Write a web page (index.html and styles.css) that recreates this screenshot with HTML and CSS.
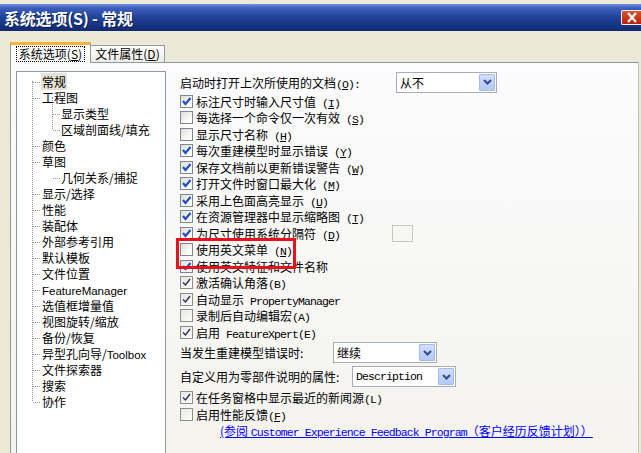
FILE: index.html
```html
<!DOCTYPE HTML>
<html lang="zh-CN">
<head>
<meta charset="UTF-8">
<title>系统选项(S) - 常规</title>
<link rel="stylesheet" href="styles.css">
</head>
<body>
  <div class="strip"></div>
  <div class="titlebar">
    <span class="title">系统选项(S) - 常规</span>
    <span class="close"><svg width="12" height="11" viewBox="0 0 12 11"><path d="M2 1 L10 10 M10 1 L2 10" stroke="#fff" stroke-width="2.2"/></svg></span>
  </div>

  <div class="tabs">
    <div class="tab on"><span class="focus">系统选项(<u>S</u>)</span></div>
    <div class="tab">文件属性(<u>D</u>)</div>
  </div>

  <div class="panel">
    <div class="tree">
      <div class="vline"></div>
      <div class="vline sub"></div>
      <div class="node"><span class="sel-node">常规</span></div>
      <div class="node">工程图</div>
      <div class="node lv2">显示类型</div>
      <div class="node lv2">区域剖面线/填充</div>
      <div class="node">颜色</div>
      <div class="node">草图</div>
      <div class="node lv2">几何关系/捕捉</div>
      <div class="node">显示/选择</div>
      <div class="node">性能</div>
      <div class="node">装配体</div>
      <div class="node">外部参考引用</div>
      <div class="node">默认模板</div>
      <div class="node">文件位置</div>
      <div class="node"><span class="en">FeatureManager</span></div>
      <div class="node">选值框增量值</div>
      <div class="node">视图旋转/缩放</div>
      <div class="node">备份/恢复</div>
      <div class="node">异型孔向导/<span class="en">Toolbox</span></div>
      <div class="node">文件探索器</div>
      <div class="node">搜索</div>
      <div class="node">协作</div>
    </div>

    <div class="opts">
      <div class="row tall">
        <span class="lbl w1">启动时打开上次所使用的文档<span class="m">(<u>O</u>):</span></span>
        <div class="combo w-a"><span class="val">从不</span><span class="arrow"><svg width="9" height="6" viewBox="0 0 9 6"><path d="M1 1 L4.5 4.5 L8 1" fill="none" stroke="#2c4c8c" stroke-width="2"/></svg></span></div>
      </div>

      <div class="row"><span class="cb"><svg width="11" height="11" viewBox="0 0 11 11"><path d="M2 5 L4.5 8 L9.5 2" fill="none" stroke="#2150c0" stroke-width="2.2"/></svg></span><span>标注尺寸时输入尺寸值<span class="m"> (<u>I</u>)</span></span></div>
      <div class="row"><span class="cb"></span><span>每选择一个命令仅一次有效<span class="m"> (<u>S</u>)</span></span></div>
      <div class="row"><span class="cb"></span><span>显示尺寸名称<span class="m"> (<u>H</u>)</span></span></div>
      <div class="row"><span class="cb"><svg width="11" height="11" viewBox="0 0 11 11"><path d="M2 5 L4.5 8 L9.5 2" fill="none" stroke="#2150c0" stroke-width="2.2"/></svg></span><span>每次重建模型时显示错误<span class="m"> (<u>Y</u>)</span></span></div>
      <div class="row"><span class="cb"><svg width="11" height="11" viewBox="0 0 11 11"><path d="M2 5 L4.5 8 L9.5 2" fill="none" stroke="#2150c0" stroke-width="2.2"/></svg></span><span>保存文档前以更新错误警告<span class="m"> (<u>W</u>)</span></span></div>
      <div class="row"><span class="cb"><svg width="11" height="11" viewBox="0 0 11 11"><path d="M2 5 L4.5 8 L9.5 2" fill="none" stroke="#2150c0" stroke-width="2.2"/></svg></span><span>打开文件时窗口最大化<span class="m"> (<u>M</u>)</span></span></div>
      <div class="row"><span class="cb"><svg width="11" height="11" viewBox="0 0 11 11"><path d="M2 5 L4.5 8 L9.5 2" fill="none" stroke="#2150c0" stroke-width="2.2"/></svg></span><span>采用上色面高亮显示<span class="m"> (<u>U</u>)</span></span></div>
      <div class="row"><span class="cb"><svg width="11" height="11" viewBox="0 0 11 11"><path d="M2 5 L4.5 8 L9.5 2" fill="none" stroke="#2150c0" stroke-width="2.2"/></svg></span><span>在资源管理器中显示缩略图<span class="m"> (<u>T</u>)</span></span></div>
      <div class="row"><span class="cb"><svg width="11" height="11" viewBox="0 0 11 11"><path d="M2 5 L4.5 8 L9.5 2" fill="none" stroke="#2150c0" stroke-width="2.2"/></svg></span><span class="lbl w2">为尺寸使用系统分隔符<span class="m"> (<u>D</u>)</span></span><span class="field"></span></div>
      <div class="row marked"><span class="cb"></span><span>使用英文菜单<span class="m"> (<u>N</u>)</span></span></div>
      <div class="row"><span class="cb"><svg width="11" height="11" viewBox="0 0 11 11"><path d="M2 5 L4.5 8 L9.5 2" fill="none" stroke="#2150c0" stroke-width="2.2"/></svg></span><span>使用英文特征和文件名称</span></div>
      <div class="row"><span class="cb thin"><svg width="11" height="11" viewBox="0 0 11 11"><path d="M2 5.5 L4.5 8 L9 2" fill="none" stroke="#23335e" stroke-width="1.4"/></svg></span><span>激活确认角落<span class="m">(B)</span></span></div>
      <div class="row"><span class="cb thin"><svg width="11" height="11" viewBox="0 0 11 11"><path d="M2 5.5 L4.5 8 L9 2" fill="none" stroke="#23335e" stroke-width="1.4"/></svg></span><span>自动显示<span class="m"> PropertyManager</span></span></div>
      <div class="row"><span class="cb thin"></span><span>录制后自动编辑宏<span class="m">(A)</span></span></div>
      <div class="row"><span class="cb thin"><svg width="11" height="11" viewBox="0 0 11 11"><path d="M2 5.5 L4.5 8 L9 2" fill="none" stroke="#23335e" stroke-width="1.4"/></svg></span><span>启用<span class="m"> FeatureXpert(E)</span></span></div>

      <div class="row combo-row">
        <span class="lbl w3">当发生重建模型错误时:</span>
        <div class="combo w-b"><span class="val">继续</span><span class="arrow"><svg width="9" height="6" viewBox="0 0 9 6"><path d="M1 1 L4.5 4.5 L8 1" fill="none" stroke="#2c4c8c" stroke-width="2"/></svg></span></div>
      </div>
      <div class="row combo-row">
        <span class="lbl w4">自定义用为零部件说明的属性:</span>
        <div class="combo w-b"><span class="val m">Description</span><span class="arrow"><svg width="9" height="6" viewBox="0 0 9 6"><path d="M1 1 L4.5 4.5 L8 1" fill="none" stroke="#2c4c8c" stroke-width="2"/></svg></span></div>
      </div>

      <div class="row gap"><span class="cb thin"><svg width="11" height="11" viewBox="0 0 11 11"><path d="M2 5.5 L4.5 8 L9 2" fill="none" stroke="#23335e" stroke-width="1.4"/></svg></span><span>在任务窗格中显示最近的新闻源<span class="m">(L)</span></span></div>
      <div class="row"><span class="cb thin"></span><span>启用性能反馈<span class="m">(<u>F</u>)</span></span></div>
      <div class="row link"><a href="#">(参阅 <span class="m">Customer Experience Feedback Program</span>（客户经历反馈计划））</a></div>
    </div>
  </div>
</body>
</html>
```

FILE: styles.css
```css
* { box-sizing: border-box; }
body {
  margin: 0;
  width: 641px;
  height: 453px;
  overflow: hidden;
  background: #ece9d8;
  font-family: "Noto Sans CJK SC", sans-serif;
  font-size: 12px;
  color: #000;
}
u { text-decoration: underline; }

.strip { height: 4px; }
.titlebar {
  height: 27px;
  display: flex;
  align-items: center;
  justify-content: space-between;
  padding-left: 4px;
  background: linear-gradient(#7191e0 0%, #3d5fbc 15%, #23459c 45%, #173582 75%, #102a70 100%);
  color: #fff;
}
.title {
  font-size: 16px;
  font-weight: bold;
  text-shadow: 1px 1px 0 #0a1c50;
  letter-spacing: -0.2px;
}
.close {
  width: 21px;
  height: 15px;
  margin-right: -1px;
  display: flex;
  align-items: center;
  justify-content: center;
  border: 1px solid #f2f2f2;
  border-right: none;
  border-radius: 2px 0 0 2px;
  background: linear-gradient(#d9542c, #b8200c);
}

.tabs {
  display: flex;
  align-items: flex-end;
  margin-top: 11px;
  padding-left: 10px;
  height: 20px;
}
.tab {
  width: 74px;
  height: 17px;
  line-height: 15px;
  text-align: center;
  border: 1px solid #919b9c;
  border-left: none;
  border-bottom: none;
  background: linear-gradient(#fefefe, #ecebe6);
}
.tab.on {
  width: 81px;
  height: 21px;
  margin-bottom: -1px;
  border-left: 1px solid #919b9c;
  border-top: 3px solid #f7b436;
  background: #fcfcfe;
  position: relative;
  padding-top: 1px;
}
.focus {
  display: inline-block;
  padding: 0 2px;
  line-height: 14px;
  outline: 1px dotted #000;
}

.panel {
  display: flex;
  margin-left: 10px;
  width: 629px;
  height: 400px;
  padding: 8px 0 0 5px;
  border: 1px solid #919b9c;
  border-right-color: #c4c2b8;
  background: linear-gradient(#fcfcfe, #f4f3ee);
}

/* tree */
.tree {
  position: relative;
  width: 150px;
  height: 400px;
  padding-top: 2px;
  border: 1px solid #8e9aa6;
  background: #fff;
}
.vline {
  position: absolute;
  left: 15px;
  top: 9px;
  height: 320px;
  border-left: 1px dotted #9a9a9a;
}
.vline.sub { left: 35px; top: 25px; height: 32px; }
.node {
  position: relative;
  height: 16px;
  line-height: 16px;
  padding-left: 25px;
  white-space: nowrap;
}
.node::before {
  content: "";
  position: absolute;
  left: 16px;
  top: 8px;
  width: 7px;
  border-top: 1px dotted #9a9a9a;
}
.node.lv2 { padding-left: 44px; }
.node.lv2::before { left: 36px; }
.sel-node { background: #e6e3d6; padding: 0 1px; margin-left: -1px; }
.en { font-family: "Liberation Sans", sans-serif; font-size: 11.5px; }

/* options */
.opts {
  padding-left: 14px;
  white-space: nowrap;
}
.row {
  position: relative;
  display: flex;
  align-items: center;
  height: 16.5px;
}
.row.tall { height: 22px; }
.row.combo-row { height: 24px; }
.row.gap { margin-top: 1px; }
.lbl { display: inline-block; }
.w1 { width: 216px; }
.w2 { width: 196px; }
.w3 { width: 153px; }
.w4 { width: 172px; }
.m {
  font-family: "Liberation Mono", monospace;
  font-size: 11.5px;
  letter-spacing: -0.9px;
}

.cb {
  display: inline-flex;
  align-items: center;
  justify-content: center;
  flex: none;
  width: 13px;
  height: 13px;
  margin-right: 3px;
  border: 1px solid #7b8894;
  background: linear-gradient(135deg, #dedcd4, #fbfbf9 70%);
}
.cb.thin { border-color: #8d8d8d; background: linear-gradient(135deg, #e8e7e2, #fdfdfc); }

.field {
  width: 21px;
  height: 17px;
  border: 1px solid #c9c7ba;
  background: #f7f7f4;
}

.combo {
  display: flex;
  align-items: center;
  height: 21px;
  padding: 1px 1px 1px 0;
  border: 1px solid #a5acb2;
  background: #fff;
}
.w-a { width: 101px; }
.w-b { width: 104px; }
.val { flex: 1; padding-left: 3px; }
.arrow {
  display: flex;
  align-items: center;
  justify-content: center;
  width: 16px;
  height: 17px;
  border: 1px solid #a2b9ee;
  border-radius: 1px;
  background: linear-gradient(#d2defc, #b4c8f6);
}

.marked { z-index: 2; }
.marked::after {
  content: "";
  position: absolute;
  left: -4px;
  top: -4px;
  width: 114px;
  height: 25px;
  border: 3px solid #e8101a;
}

.link { padding-left: 40px; }
.link a { color: #0000ff; text-decoration: underline; }
```
